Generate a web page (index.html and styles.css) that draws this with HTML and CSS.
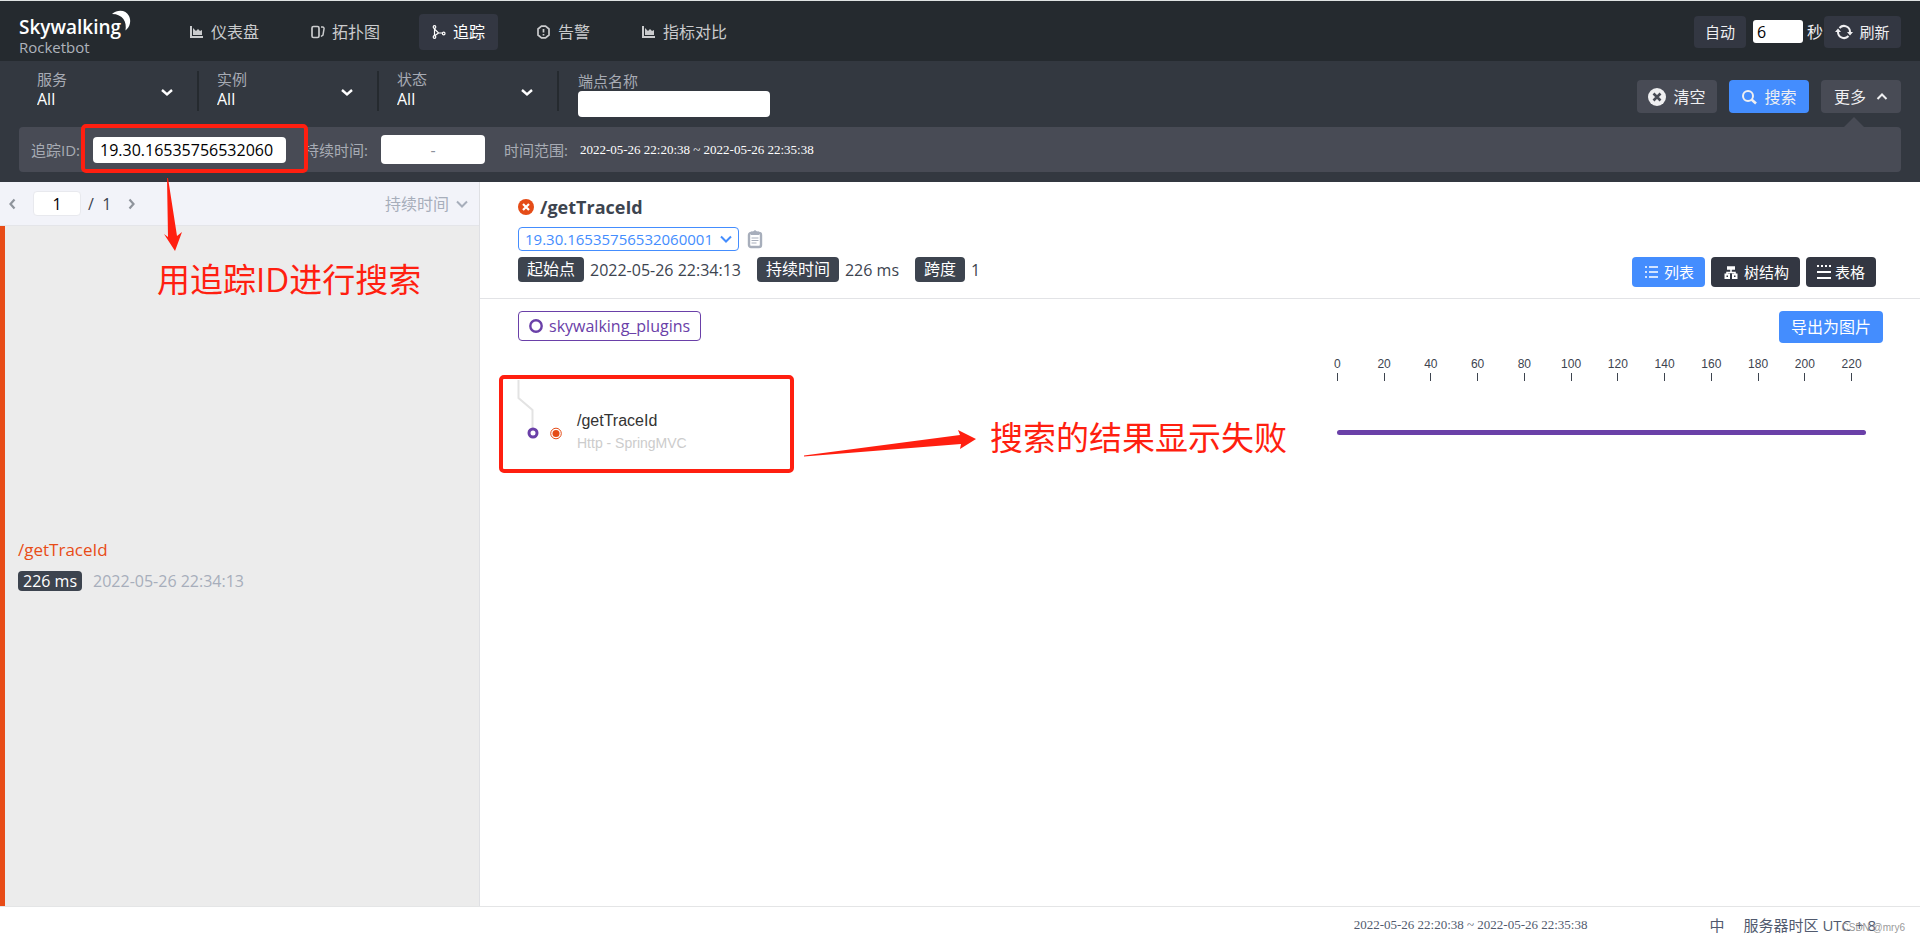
FILE: index.html
```html
<!DOCTYPE html>
<html lang="zh-CN">
<head>
<meta charset="utf-8">
<title>Skywalking Rocketbot</title>
<link rel="stylesheet" href="styles.css">
</head>
<body>
<div class="app">
  <header class="topbar">
    <div class="logo">
      <span class="logo-name">Skywalking</span>
      <span class="logo-sub">Rocketbot</span>
      <svg class="logo-moon" width="22" height="22" viewBox="0 0 22 22"><path d="M1 4C7-1 15 0 18 6c2.500 5 1 11-3.500 14.500C16 12 12 4 1 4z" fill="#fff"/></svg>
    </div>
    <nav class="nav">
      <a class="nav-item" href="#"><svg width="14" height="14" viewBox="0 0 14 14"><path d="M1 1v11h12" fill="none" stroke="currentColor" stroke-width="2"/><path d="M3 10V3l3 3 2-2 2 2 2-1v5z" fill="currentColor"/></svg>仪表盘</a>
      <a class="nav-item" href="#"><svg width="14" height="14" viewBox="0 0 14 14"><rect x="1" y="1.500" width="7" height="11" rx="1.500" fill="none" stroke="currentColor" stroke-width="1.700"/><path d="M10 2h1.500a1.500 1.500 0 0 1 1.500 2l-1 6-2 1.500" fill="none" stroke="currentColor" stroke-width="1.500"/></svg>拓扑图</a>
      <a class="nav-item active" href="#"><svg width="14" height="14" viewBox="0 0 14 14" fill="none" stroke="currentColor" stroke-width="1.200"><circle cx="2.500" cy="2" r="1.300"/><circle cx="2.500" cy="12" r="1.300"/><circle cx="11.700" cy="8.500" r="1.300"/><path d="M2.500 3.500v7M3 4.500l3.500 3.500h4M3 10.500l3.500-2.500"/></svg>追踪</a>
      <a class="nav-item" href="#"><svg width="14" height="14" viewBox="0 0 14 14"><path d="M4.500 1.200h4l3.500 2.800v6l-3.500 2.800h-4L1 10V4z" fill="none" stroke="currentColor" stroke-width="1.700"/><path d="M6.500 4v3.500M6.500 9v1.500" stroke="currentColor" stroke-width="1.700"/></svg>告警</a>
      <a class="nav-item" href="#"><svg width="14" height="14" viewBox="0 0 14 14"><path d="M1 1v11h12" fill="none" stroke="currentColor" stroke-width="2"/><path d="M3 10V3l3 3 2-2 2 2 2-1v5z" fill="currentColor"/></svg>指标对比</a>
    </nav>
    <div class="reload">
      <button class="btn btn-auto">自动</button>
      <input class="sec-input" id="sec" type="text" value="6"><label class="sec-label" for="sec">秒</label>
      <button class="btn btn-refresh"><svg width="18" height="16" viewBox="0 0 18 16" fill="none" stroke="currentColor" stroke-width="2"><path d="M4.500 4A6 6 0 0 1 15 8v1.500M13.500 12A6 6 0 0 1 3 8V6.500"/><path d="M0 8h6L3 4.500zM12 8h6l-3 3.500z" fill="currentColor" stroke="none"/></svg>刷新</button>
    </div>
  </header>

  <section class="filters">
    <div class="filter-row">
      <div class="field"><label for="svc">服务</label><select id="svc"><option>All</option></select><svg class="field-arrow" width="14" height="10" viewBox="0 0 14 10"><path d="M2 2l5 4.500L12 2" fill="none" stroke="#fff" stroke-width="2.400"/></svg></div>
      <div class="field"><label for="inst">实例</label><select id="inst"><option>All</option></select><svg class="field-arrow" width="14" height="10" viewBox="0 0 14 10"><path d="M2 2l5 4.500L12 2" fill="none" stroke="#fff" stroke-width="2.400"/></svg></div>
      <div class="field"><label for="state">状态</label><select id="state"><option>All</option></select><svg class="field-arrow" width="14" height="10" viewBox="0 0 14 10"><path d="M2 2l5 4.500L12 2" fill="none" stroke="#fff" stroke-width="2.400"/></svg></div>
      <div class="endpoint"><label for="ep">端点名称</label><input id="ep" type="text"></div>
      <div class="actions">
        <button class="act act-clear"><svg width="18" height="18" viewBox="0 0 18 18"><circle cx="9" cy="9" r="9" fill="currentColor"/><path d="M5.500 5.500l7 7M12.500 5.500l-7 7" stroke="#484b55" stroke-width="2.600"/></svg>清空</button>
        <button class="act act-search"><svg width="16" height="16" viewBox="0 0 16 16" fill="none" stroke="currentColor" stroke-width="2"><circle cx="7" cy="7" r="5"/><path d="M10.500 10.500l4.500 4" stroke-width="2.600"/></svg>搜索</button>
        <button class="act act-more">更多<svg width="12" height="8" viewBox="0 0 12 8"><path d="M1.500 6L6 1.500 10.500 6" fill="none" stroke="currentColor" stroke-width="2"/></svg></button>
      </div>
    </div>
    <div class="more-row">
      <label for="tid">追踪ID:</label><input class="tid" id="tid" type="text" value="19.30.16535756532060">
      <label for="dur">持续时间:</label><input class="dur" id="dur" type="text" value="-">
      <span class="range-label">时间范围:</span><span class="range">2022-05-26 22:20:38 ~ 2022-05-26 22:35:38</span>
    </div>
  </section>

  <main class="main">
    <aside class="list">
      <div class="pager">
        <button class="icon-btn" aria-label="上一页"><svg width="8" height="12" viewBox="0 0 8 12"><path d="M6.500 1.500L2.500 6l4 4.500" fill="none" stroke="#8f949c" stroke-width="2.200"/></svg></button>
        <input class="page-input" type="text" value="1" aria-label="页码">
        <span class="page-total">/&nbsp; 1</span>
        <button class="icon-btn" aria-label="下一页"><svg width="8" height="12" viewBox="0 0 8 12"><path d="M1.500 1.500L5.500 6l-4 4.500" fill="none" stroke="#8f949c" stroke-width="2.200"/></svg></button>
        <button class="sort">持续时间<svg width="12" height="8" viewBox="0 0 12 8"><path d="M1 1.500L6 6.500 11 1.500" fill="none" stroke="currentColor" stroke-width="2"/></svg></button>
      </div>
      <div class="trace-item">
        <div class="trace-name">/getTraceId</div>
        <div class="trace-meta"><span class="ms">226 ms</span><span class="trace-time">2022-05-26 22:34:13</span></div>
      </div>
    </aside>

    <section class="detail">
      <div class="detail-head">
        <h1 class="title"><svg width="16" height="16" viewBox="0 0 16 16"><circle cx="8" cy="8" r="8" fill="#e54c17"/><path d="M5 5l6 6M11 5l-6 6" stroke="#fff" stroke-width="2.200"/></svg>/getTraceId</h1>
        <div class="id-row">
          <button class="id-select">19.30.16535756532060001<svg width="12" height="8" viewBox="0 0 12 8"><path d="M1 1.500L6 6.500 11 1.500" fill="none" stroke="currentColor" stroke-width="2"/></svg></button>
          <button class="icon-btn" aria-label="复制"><svg width="16" height="18" viewBox="0 0 16 18"><rect x="2" y="3" width="12" height="14" rx="2" fill="none" stroke="#a7aebb" stroke-width="2.400"/><path d="M4 1.500h2L8 0l2 1.500h2V5H4z" fill="#a7aebb"/><path d="M4.500 8h7M4.500 10.500h7M4.500 13h5" stroke="#a7aebb"/></svg></button>
        </div>
        <div class="info-row">
          <div class="info"><span class="tag">起始点</span><span>2022-05-26 22:34:13</span></div>
          <div class="info"><span class="tag">持续时间</span><span>226 ms</span></div>
          <div class="info"><span class="tag">跨度</span><span>1</span></div>
          <div class="views">
            <button class="view on"><svg width="13" height="12" viewBox="0 0 13 12" stroke="currentColor" stroke-width="1.600"><path d="M0 1h2M4 1h9M0 6h2M4 6h9M0 11h2M4 11h9"/></svg>列表</button>
            <button class="view"><svg width="14" height="13" viewBox="0 0 14 13" fill="none" stroke="currentColor"><path d="M3 2h8" stroke-width="3.500"/><path d="M7 3v3M3 9V6.500h8V9" stroke-width="1.600"/><rect x="1.500" y="8.500" width="3.500" height="3.500" stroke-width="2"/><rect x="9" y="8.500" width="3.500" height="3.500" stroke-width="2"/></svg>树结构</button>
            <button class="view view-table"><svg width="14" height="14" viewBox="0 0 14 14" stroke="currentColor" stroke-width="2"><path d="M0 1h2M4 1h2M8 1h2M12 1h2M0 7h14M0 13h14"/></svg>表格</button>
          </div>
        </div>
      </div>
      <div class="detail-body">
        <div class="legend-row">
          <span class="legend"><svg width="14" height="14" viewBox="0 0 14 14"><circle cx="7" cy="7" r="5.700" fill="none" stroke="#6a40a8" stroke-width="2.400"/></svg>skywalking_plugins</span>
          <button class="export">导出为图片</button>
        </div>
        <div class="chart">
          <div class="span">
            <svg width="46" height="62" viewBox="0 0 46 62"><path d="M.5 0v18l14 12v20" fill="none" stroke="#e3e3e3" stroke-width="2"/><circle cx="15" cy="53" r="4" fill="#fff" stroke="#6a40a8" stroke-width="3"/><circle cx="38" cy="53.500" r="5.300" fill="#fff" stroke="#e54c17"/><circle cx="38" cy="53.500" r="3.500" fill="#e54c17"/></svg>
            <div class="span-text"><div class="span-name">/getTraceId</div><div class="span-layer">Http - SpringMVC</div></div>
          </div>
          <div class="timeline">
            <div class="axis"><span>0</span><span>20</span><span>40</span><span>60</span><span>80</span><span>100</span><span>120</span><span>140</span><span>160</span><span>180</span><span>200</span><span>220</span></div>
            <div class="bar"></div>
          </div>
        </div>
      </div>
    </section>
  </main>

  <footer class="footer">
    <span class="range foot-range">2022-05-26 22:20:38 ~ 2022-05-26 22:35:38</span>
    <span class="lang">中</span>
    <span class="zone">服务器时区 UTC + 8</span>
  </footer>

  <div class="mark mark-id"></div>
  <div class="mark mark-span"></div>
  <svg class="arrow arrow-down" width="20" height="74" viewBox="0 0 20 74"><path d="M4 0h1l9 58 5-4-7 19L1 56l4 3z" fill="#ff1f10"/></svg>
  <svg class="arrow arrow-right" width="174" height="22" viewBox="0 0 174 22"><path d="M1 26.500v-1L157 5l-2-5 18 9-16 10 1-5z" fill="#ff1f10"/></svg>
  <div class="note note-id">用追踪ID进行搜索</div>
  <div class="note note-span">搜索的结果显示失败</div>
  <div class="watermark">CSDN @mry6</div>
</div>
</body>
</html>
```
FILE: styles.css
```css
* { box-sizing: border-box; }
body {
  margin: 0;
  font: 16px/24px "Open Sans", "Noto Sans CJK SC", sans-serif;
  color: #3d444f;
  background: #fff;
}
button, input, select { font: inherit; color: inherit; border: 0; margin: 0; padding: 0; background: none; }
button { display: flex; align-items: center; justify-content: center; white-space: nowrap; cursor: pointer; }
input { background: #fff; border-radius: 4px; color: #000; }
svg { flex: none; overflow: visible; }

.app { position: relative; min-height: 100vh; display: flex; flex-direction: column; }

.topbar {
  display: flex; align-items: center;
  height: 61px; padding: 1px 19px 0;
  background: #252a2f; border-top: 1px solid #dfe3e3;
  color: #efeff1;
}
.logo { position: relative; width: 158px; padding-top: 8px; display: flex; flex-direction: column; }
.logo-name { font-size: 19px; font-weight: 600; line-height: 22px; color: #fff; }
.logo-sub { font-size: 15px; line-height: 18px; color: #aeb3bb; }
.logo-moon { position: absolute; left: 92px; top: 2px; }
.nav { display: flex; gap: 26px; }
.nav-item {
  display: flex; align-items: center; gap: 7px;
  height: 36px; padding: 0 13px; border-radius: 4px;
  color: #cacbcd; text-decoration: none;
}
.nav-item.active { background: #333742; color: #fff; }
.reload { margin-left: auto; display: flex; align-items: center; }
.btn { height: 32px; border-radius: 4px; background: #333742; font-size: 15px; }
.btn-auto { width: 52px; margin-right: 7px; }
.btn-refresh { width: 77px; gap: 6px; }
.sec-input { width: 50px; height: 23px; padding-left: 4px; border-radius: 3px; }
.sec-label { padding: 0 1px 0 4px; }

.filters { background: #333840; padding: 0 19px 10px; color: #efeff1; }
.filter-row { display: flex; height: 66px; }
.field {
  position: relative; width: 180px; height: 40px; margin-top: 10px; padding: 0 18px 2px;
  border-right: 2px solid #252a2f;
  display: flex; flex-direction: column; justify-content: center;
}
.filters label, .range-label { font-size: 15px; line-height: 20px; color: #a7abb4; }
.field label { line-height: 18px; }
.field select { appearance: none; width: 100%; height: 22px; line-height: 22px; color: #fff; }
.field-arrow { position: absolute; right: 23px; top: 17px; pointer-events: none; }
.endpoint { display: flex; flex-direction: column; padding: 10px 19px 0; }
.endpoint input { width: 192px; height: 26px; }
.actions { margin: 19px 0 0 auto; display: flex; gap: 12px; align-items: flex-start; }
.act { width: 80px; height: 33px; border-radius: 4px; background: #484b55; gap: 7px; }
.act-search { background: #448dfe; }
.act-more { gap: 10px; }

.more-row {
  position: relative; display: flex; align-items: center;
  height: 45px; padding: 0 12px; border-radius: 4px; background: #484b55;
}
.more-row::before {
  content: ""; position: absolute; right: 37px; top: -10px;
  border: 10px solid transparent; border-top: 0; border-bottom-color: #484b55;
}
.tid { width: 193px; height: 26px; margin: 0 18px 0 13px; padding: 0 7px; }
.dur { width: 104px; height: 29px; margin: 0 19px 0 13px; text-align: center; color: #8b929c; }
.range { font: 13px/20px "Liberation Serif", serif; white-space: nowrap; }
.more-row .range { margin-left: 12px; color: #fff; }

.main { flex: 1; display: flex; }
.list { width: 25%; display: flex; flex-direction: column; border-right: 1px solid #dfe0e4; background: #ececec; }
.pager {
  display: flex; align-items: center; height: 44px; padding: 0 11px 0 8px;
  background: #f2f3f9; border-bottom: 1px solid #e4e5e9;
}
.page-input { width: 48px; height: 25px; margin: 0 7px 0 17px; text-align: center; border: 1px solid #e8e9ee; }
.page-total { width: 40px; }
.sort { margin-left: auto; gap: 7px; color: #a7aebb; }
.trace-item {
  flex: 1; display: flex; flex-direction: column; justify-content: center; gap: 8px;
  border-left: 5px solid #e84c17; padding: 0 13px;
}
.trace-name { font-size: 17px; line-height: 22px; color: #e84c17; }
.trace-meta { display: flex; align-items: center; gap: 11px; color: #a7aebb; }
.ms { padding: 0 5px; line-height: 20px; border-radius: 4px; background: #3d444f; color: #fff; }

.detail { flex: 1; min-width: 0; }
.detail-head { height: 117px; padding: 13px 44px 0 38px; border-bottom: 1px solid #e2e3e6; }
.title { display: flex; align-items: center; gap: 6px; margin: 0 0 8px; font-size: 18px; line-height: 24px; font-weight: 700; }
.id-row { display: flex; align-items: center; gap: 8px; margin-bottom: 6px; }
.id-select { height: 24px; padding: 0 6px; gap: 7px; border: 1px solid #448dfe; border-radius: 4px; color: #448dfe; font-size: 15px; }
.info-row { display: flex; align-items: flex-start; gap: 16px; }
.info { display: flex; align-items: center; gap: 6px; }
.tag { padding: 0 9px; line-height: 25px; border-radius: 4px; background: #3d444f; color: #fff; }
.views { margin-left: auto; display: flex; gap: 6px; }
.view { height: 30px; padding: 0 11px 0 13px; gap: 6px; border-radius: 4px; background: #333742; color: #fff; font-size: 15px; }
.view.on { background: #448dfe; }
.view-table { padding: 0 11px; gap: 4px; }

.detail-body { padding: 12px 37px 0 38px; }
.legend-row { display: flex; align-items: flex-start; justify-content: space-between; }
.legend { display: flex; align-items: center; gap: 6px; height: 30px; padding: 0 10px; border: 1px solid #6a40a8; border-radius: 4px; color: #6a40a8; }
.export { height: 32px; padding: 0 12px; border-radius: 4px; background: #448dfe; color: #fff; }
.chart { display: flex; justify-content: space-between; padding: 12px 8px 0 0; font-family: "Liberation Sans", sans-serif; }
.span { display: flex; gap: 13px; padding-top: 25px; }
.span-text { padding-top: 29px; }
.span-name { font-size: 16px; line-height: 23px; color: #333; }
.span-layer { font-size: 14px; line-height: 22px; color: #ccc; }
.timeline { width: 561px; }
.axis { display: flex; font: 12px/18px "Liberation Sans", sans-serif; }
.axis span { flex: 1; text-align: center; }
.axis span::after { content: ""; display: block; width: 1px; height: 8px; margin: 0 auto; background: #3d444f; }
.bar { height: 5px; margin: 49px 9px 0 23px; border-radius: 3px; background: #6a40a8; }

.footer { display: flex; align-items: center; height: 36px; padding: 0 44px; border-top: 1px solid #e4e5e6; color: #515a6e; font-size: 15px; }
.foot-range { margin-left: auto; }
.lang { margin: 0 19px 0 122px; }

.mark { position: absolute; border: 4px solid #ff1f10; border-radius: 5px; }
.mark-id { left: 81px; top: 124px; width: 227px; height: 49px; }
.mark-span { left: 499px; top: 375px; width: 295px; height: 98px; }
.arrow { position: absolute; }
.arrow-down { left: 163px; top: 178px; }
.arrow-right { left: 803px; top: 430px; }
.note { position: absolute; font-size: 33px; line-height: 48px; color: #ff1f10; white-space: nowrap; }
.note-id { left: 157px; top: 256px; }
.note-span { left: 990px; top: 414px; }
.watermark { position: absolute; right: 15px; bottom: 6px; font: 10px/16px "Liberation Sans", sans-serif; color: #9a9a9a; }
```
